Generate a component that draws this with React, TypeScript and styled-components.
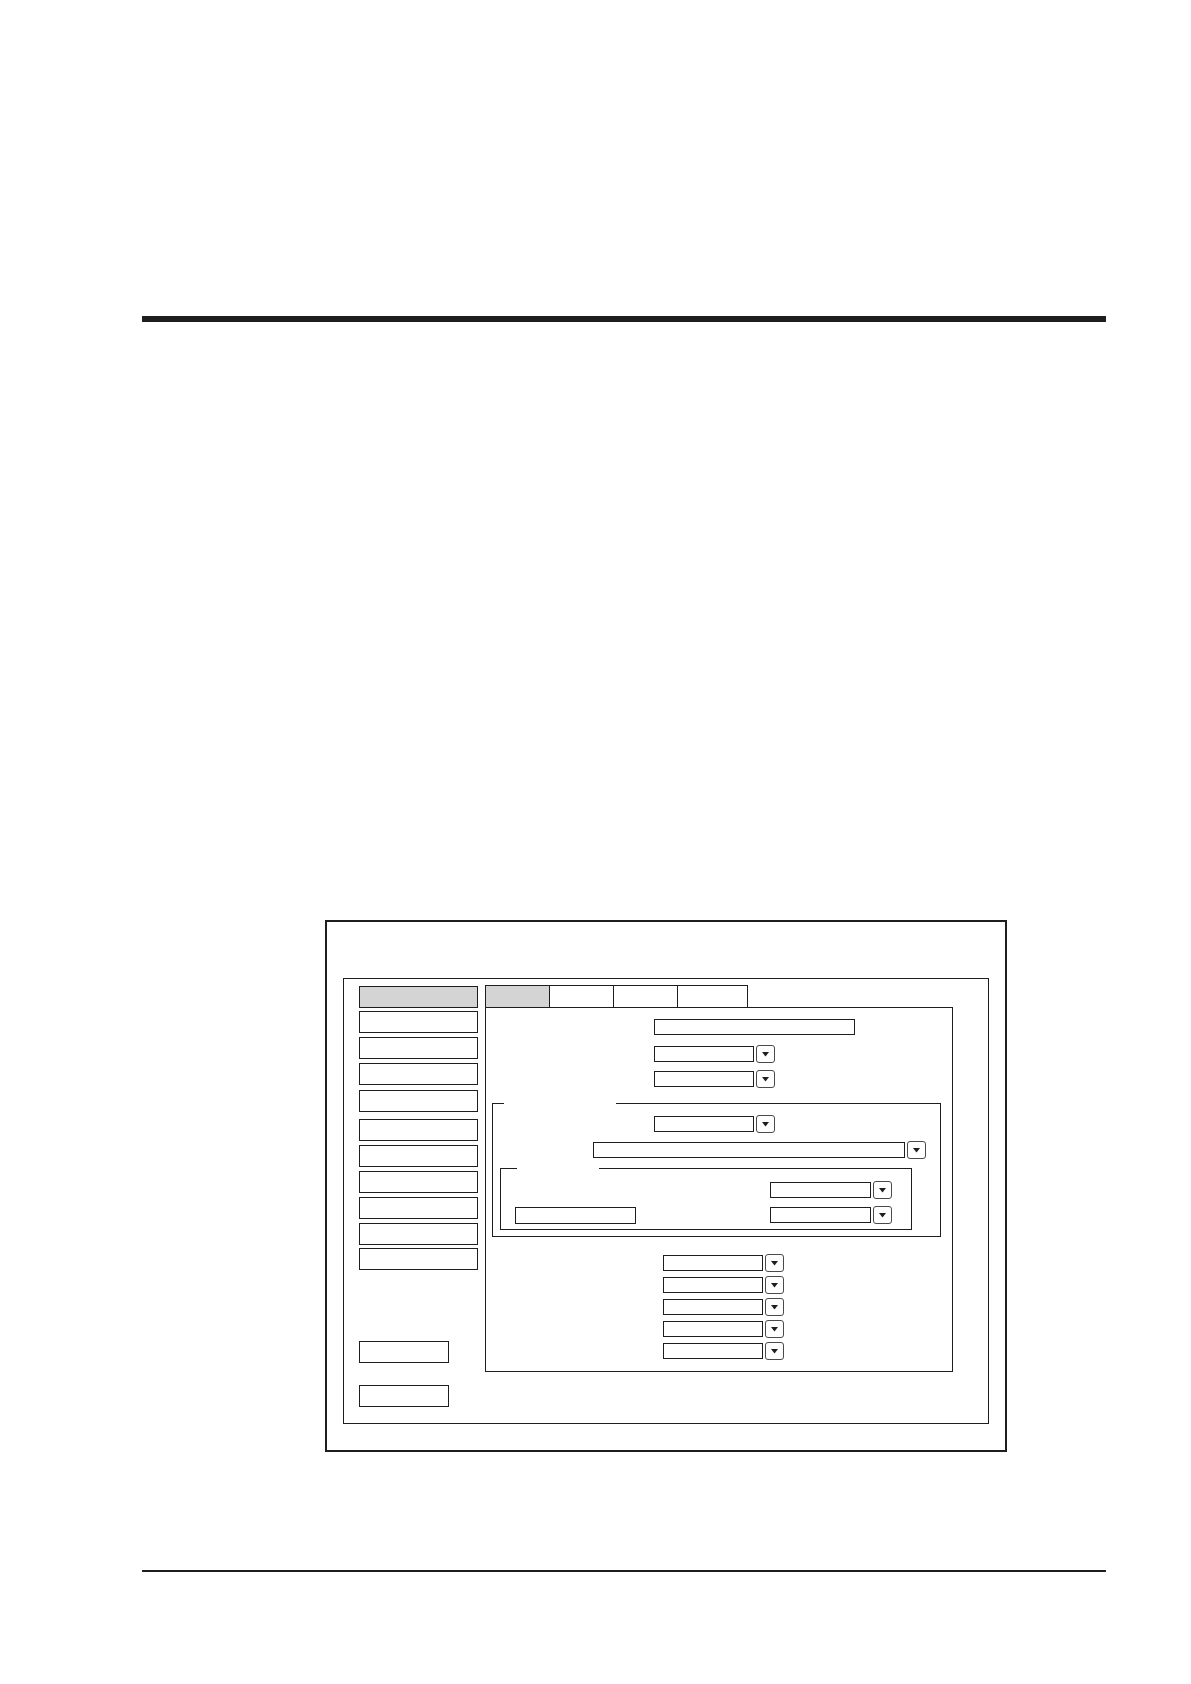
import React from "react";
import styled, { createGlobalStyle } from "styled-components";

const ink = "#1e1e1e";
const tabGrey = "#d4d4d4";

const GlobalStyle = createGlobalStyle`
  html, body {
    margin: 0;
    padding: 0;
    background: #ffffff;
  }
  body {
    font-family: "Liberation Sans", Arial, sans-serif;
  }
  *, *::before, *::after {
    box-sizing: border-box;
  }
`;

interface SpaceProps {
  $top?: number;
  $left?: number;
}

interface WidthProps {
  $w: number;
}

interface GroupProps {
  $w: number;
  $legendX: number;
  $legendW: number;
}

const navTops = [986, 1011, 1037, 1063, 1090, 1119, 1145, 1171, 1197, 1223, 1248];
const tabs = [65, 64, 64, 70];

function DropDown({ width }: { width: number }) {
  return (
    <ComboWrap>
      <Field $w={width} />
      <DropButton>
        <svg width="7" height="5" viewBox="0 0 7 5">
          <polygon points="0,0 7,0 3.5,4.5" fill={ink} />
        </svg>
      </DropButton>
    </ComboWrap>
  );
}

export default function App() {
  return (
    <Page>
      <GlobalStyle />
      <HeaderRule />
      <Frame>
        <Window>
          <Sidebar>
            {navTops.map((top, i) => (
              <NavItem
                key={top}
                $active={i === 0}
                $gap={i === 0 ? 0 : top - navTops[i - 1] - 22}
              />
            ))}
            <SideButton $gap={71} />
            <SideButton $gap={22} />
          </Sidebar>
          <Main>
            <TabStrip>
              {tabs.map((w, i) => (
                <Tab key={i} $w={w} $first={i === 0} $active={i === 0} />
              ))}
            </TabStrip>
            <TabPanel>
              <Row $top={11} $left={168}>
                <Field $w={201} />
              </Row>
              <Row $top={10} $left={168}>
                <DropDown width={100} />
              </Row>
              <Row $top={7} $left={168}>
                <DropDown width={100} />
              </Row>

              <Group $w={449} $legendX={11} $legendW={112} $top={15} $left={6} $bottom={6}>
                <Row $top={11} $left={161}>
                  <DropDown width={100} />
                </Row>
                <Row $top={8} $left={100}>
                  <DropDown width={312} />
                </Row>
                <Group $w={412} $legendX={16} $legendW={82} $top={9} $left={7} $bottom={5}>
                  <SplitRow $top={12}>
                    <span />
                    <DropDown width={101} />
                  </SplitRow>
                  <SplitRow $top={7}>
                    <Field $w={121} $h={17} />
                    <DropDown width={101} />
                  </SplitRow>
                </Group>
              </Group>

              <ComboStack $top={17} $left={177}>
                {[0, 1, 2, 3, 4].map((n) => (
                  <DropDown key={n} width={100} />
                ))}
              </ComboStack>
            </TabPanel>
          </Main>
        </Window>
      </Frame>
      <FooterRule />
    </Page>
  );
}

const Page = styled.div`
  width: 1191px;
  min-height: 1684px;
  padding-top: 316px;
  display: flex;
  flex-direction: column;
  background: #ffffff;
`;

const HeaderRule = styled.div`
  margin-left: 142px;
  width: 964px;
  height: 6px;
  background: ${ink};
`;

const FooterRule = styled.div`
  margin-left: 142px;
  margin-top: 118px;
  width: 964px;
  height: 2px;
  background: ${ink};
`;

const Frame = styled.div`
  margin-top: 598px;
  margin-left: 325px;
  width: 682px;
  height: 532px;
  border: 2px solid ${ink};
  padding: 56px 0 0 16px;
`;

const Window = styled.div`
  width: 646px;
  height: 446px;
  border: 1px solid ${ink};
  padding: 6px 0 0 15px;
  display: flex;
  align-items: flex-start;
  gap: 7px;
`;

const Sidebar = styled.div`
  width: 119px;
  margin-top: 1px;
  display: flex;
  flex-direction: column;
`;

const NavItem = styled.div<{ $active?: boolean; $gap: number }>`
  height: 22px;
  margin-top: ${(p) => p.$gap}px;
  border: 1px solid ${ink};
  background: ${(p) => (p.$active ? tabGrey : "#ffffff")};
`;

const SideButton = styled.div<{ $gap: number }>`
  width: 90px;
  height: 22px;
  margin-top: ${(p) => p.$gap}px;
  border: 1px solid ${ink};
  background: #ffffff;
`;

const Main = styled.div`
  width: 468px;
  display: flex;
  flex-direction: column;
`;

const TabStrip = styled.div`
  display: flex;
  height: 22px;
`;

const Tab = styled.div<{ $w: number; $first?: boolean; $active?: boolean }>`
  width: ${(p) => p.$w}px;
  height: 22px;
  border-top: 1px solid ${ink};
  border-right: 1px solid ${ink};
  border-left: ${(p) => (p.$first ? `1px solid ${ink}` : "none")};
  background: ${(p) => (p.$active ? tabGrey : "#ffffff")};
`;

const TabPanel = styled.div`
  width: 468px;
  height: 365px;
  border: 1px solid ${ink};
  display: flex;
  flex-direction: column;
  align-items: flex-start;
`;

const Row = styled.div<SpaceProps>`
  display: flex;
  align-items: center;
  margin-top: ${(p) => p.$top ?? 0}px;
  margin-left: ${(p) => p.$left ?? 0}px;
`;

const SplitRow = styled.div<SpaceProps>`
  display: flex;
  align-items: center;
  justify-content: space-between;
  margin-top: ${(p) => p.$top ?? 0}px;
  padding: 0 19px 0 14px;
`;

const Group = styled.div<GroupProps & SpaceProps & { $bottom: number }>`
  position: relative;
  width: ${(p) => p.$w}px;
  margin-top: ${(p) => p.$top ?? 0}px;
  margin-left: ${(p) => p.$left ?? 0}px;
  padding-bottom: ${(p) => p.$bottom}px;
  border: 1px solid ${ink};
  display: flex;
  flex-direction: column;

  &::before {
    content: "";
    position: absolute;
    top: -1px;
    left: ${(p) => p.$legendX}px;
    width: ${(p) => p.$legendW}px;
    height: 1px;
    background: #ffffff;
  }
`;

const ComboStack = styled.div<SpaceProps>`
  display: flex;
  flex-direction: column;
  gap: 4px;
  margin-top: ${(p) => p.$top ?? 0}px;
  margin-left: ${(p) => p.$left ?? 0}px;
`;

const ComboWrap = styled.div`
  display: flex;
  align-items: center;
  gap: 2px;
`;

const Field = styled.div<WidthProps & { $h?: number }>`
  width: ${(p) => p.$w}px;
  height: ${(p) => p.$h ?? 16}px;
  border: 1px solid ${ink};
  background: #ffffff;
`;

const DropButton = styled.div`
  width: 19px;
  height: 18px;
  border: 1px solid #4a4a4a;
  border-radius: 3px;
  background: #ffffff;
  display: flex;
  align-items: center;
  justify-content: center;
`;
